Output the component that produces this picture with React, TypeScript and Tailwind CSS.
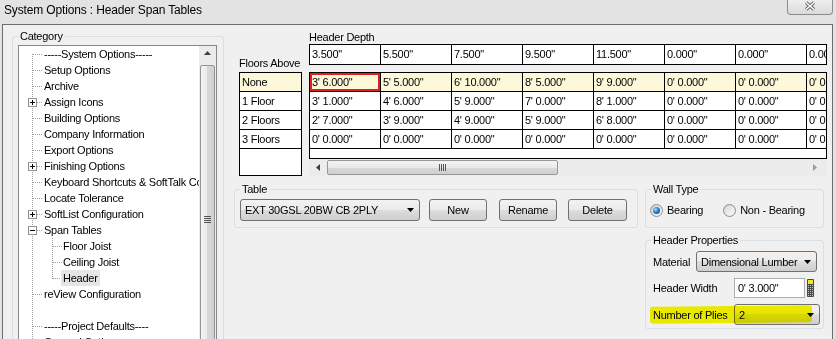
import type { ReactNode } from "react";

const depths = ['3.500"', '5.500"', '7.500"', '9.500"', '11.500"', '0.000"', '0.000"', '0.000"'];
const zero = `0' 0.000"`;
const spans = [
  { floors: "None", values: [`3' 6.000"`, `5' 5.000"`, `6' 10.000"`, `8' 5.000"`, `9' 9.000"`, zero, zero, zero] },
  { floors: "1 Floor", values: [`3' 1.000"`, `4' 6.000"`, `5' 9.000"`, `7' 0.000"`, `8' 1.000"`, zero, zero, zero] },
  { floors: "2 Floors", values: [`2' 7.000"`, `3' 9.000"`, `4' 9.000"`, `5' 9.000"`, `6' 8.000"`, zero, zero, zero] },
  { floors: "3 Floors", values: [zero, zero, zero, zero, zero, zero, zero, zero] },
];

interface TreeNode {
  label: string;
  child?: boolean;
  box?: "plus" | "minus";
  first?: boolean;
  last?: boolean;
  blank?: boolean;
  selected?: boolean;
}

const tree: TreeNode[] = [
  { label: "-----System Options-----", first: true },
  { label: "Setup Options" },
  { label: "Archive" },
  { label: "Assign Icons", box: "plus" },
  { label: "Building Options" },
  { label: "Company Information" },
  { label: "Export Options" },
  { label: "Finishing Options", box: "plus" },
  { label: "Keyboard Shortcuts & SoftTalk Commands" },
  { label: "Locate Tolerance" },
  { label: "SoftList Configuration", box: "plus" },
  { label: "Span Tables", box: "minus" },
  { label: "Floor Joist", child: true },
  { label: "Ceiling Joist", child: true },
  { label: "Header", child: true, last: true, selected: true },
  { label: "reView Configuration" },
  { label: "", blank: true },
  { label: "-----Project Defaults----" },
  { label: "General Options" },
];

const buttonFace =
  "rounded-[3px] border border-[#707070] bg-[linear-gradient(#f2f2f2,#ebebeb_50%,#dddddd_50%,#cfcfcf)]";

function Gutter({ node }: { node: TreeNode }) {
  const w = node.child ? 44 : 25;
  return (
    <svg width={w} height={16} className="shrink-0">
      <g stroke="#a0a0a0" strokeDasharray="1 1" shapeRendering="crispEdges">
        <line x1={13.5} y1={node.first ? 8 : 0} x2={13.5} y2={16} />
        {!node.child && !node.blank && <line x1={14} y1={8.5} x2={24} y2={8.5} />}
        {node.child && <line x1={33.5} y1={0} x2={33.5} y2={node.last ? 9 : 16} />}
        {node.child && <line x1={34} y1={8.5} x2={43} y2={8.5} />}
      </g>
      {node.box && (
        <g shapeRendering="crispEdges">
          <rect x={9.5} y={4.5} width={8} height={8} fill="#ffffff" stroke="#919191" />
          <line x1={11} y1={8.5} x2={16} y2={8.5} stroke="#000" />
          {node.box === "plus" && <line x1={13.5} y1={6} x2={13.5} y2={11} stroke="#000" />}
        </g>
      )}
    </svg>
  );
}

function GroupBox({ label, className, children }: { label: string; className: string; children?: ReactNode }) {
  return (
    <div className={`shrink-0 rounded-[3px] border border-[#d5dfe5] ${className}`}>
      <div className="-mt-[8px] ml-[5px] w-fit bg-[#f0f0f0] px-[2px] leading-[14px]">{label}</div>
      {children}
    </div>
  );
}

function Combo({ text, className }: { text: string; className: string }) {
  return (
    <div className={`flex shrink-0 items-center justify-between pl-[4px] pr-[5px] ${buttonFace} ${className}`}>
      <span className="whitespace-nowrap leading-[14px]">{text}</span>
      <svg width="7" height="4">
        <path d="M0 0h7L3.5 4z" fill="#000" />
      </svg>
    </div>
  );
}

function Radio({ checked, label }: { checked?: boolean; label: string }) {
  return (
    <div className="flex items-center gap-[4px]">
      <div className="flex h-[13px] w-[13px] items-center justify-center rounded-full border border-[#8f8f8f] bg-[linear-gradient(135deg,#cfcfcf,#f9f9f9)]">
        {checked ? (
          <div className="h-[7px] w-[7px] rounded-full bg-[radial-gradient(circle_at_35%_35%,#a9dcff,#2a7fd4_45%,#0b3c7c)]" />
        ) : (
          <div className="h-[9px] w-[9px] rounded-full bg-[linear-gradient(135deg,#d9d9d9,#fafafa)]" />
        )}
      </div>
      <span className="leading-[14px]">{label}</span>
    </div>
  );
}

function Tree() {
  return (
    <div className="ml-[5px] mt-[2px] flex h-[300px] w-[199px] border border-[#828790] bg-white">
      <div className="w-[180px] overflow-hidden">
        {tree.map((node, i) => (
          <div key={i} className="flex h-[16px] items-center whitespace-nowrap">
            <Gutter node={node} />
            {node.selected ? (
              <span className="-ml-[2px] bg-[#e5e5e5] px-[2px] leading-[16px]">{node.label}</span>
            ) : (
              <span className="leading-[16px]">{node.label}</span>
            )}
          </div>
        ))}
      </div>
      <div className="flex w-[17px] shrink-0 flex-col bg-[#ececec]">
        <div className="flex h-[17px] items-center justify-center">
          <svg width="7" height="4">
            <path d="M3.5 0L7 4H0z" fill="#404040" />
          </svg>
        </div>
        <div className="mx-[1px] mt-[4px] flex h-[300px] flex-col items-center rounded-[2px] border border-[#959595] bg-[linear-gradient(90deg,#f4f4f4,#e9e9e9_50%,#d9d9d9_50%,#cfcfcf)] pt-[150px]">
          <svg width="7" height="8">
            <g fill="#555">
              <rect x="0" y="0" width="7" height="1" />
              <rect x="0" y="2" width="7" height="1" />
              <rect x="0" y="4" width="7" height="1" />
              <rect x="0" y="6" width="7" height="1" />
            </g>
          </svg>
        </div>
      </div>
    </div>
  );
}

function SpanGrid() {
  return (
    <div className="ml-[7px] w-[518px] shrink-0">
      <div className="mt-[5px] leading-[14px]">Header Depth</div>
      <div className="flex h-[21px] overflow-hidden border border-black bg-white">
        {depths.map((d, i) => (
          <div key={i} className="w-[71px] shrink-0 border-r border-black pl-[2px] leading-[19px]">
            {d}
          </div>
        ))}
      </div>
      <div className="mt-[7px] h-[87px] overflow-hidden border border-black bg-white">
        {spans.map((row, r) => (
          <div key={r} className={`flex h-[19px] border-b border-black ${r === 0 ? "bg-[#fcf8d9]" : ""}`}>
            {row.values.map((v, c) => (
              <div key={c} className="h-[18px] w-[71px] shrink-0 border-r border-black whitespace-nowrap">
                {r === 0 && c === 0 ? (
                  <div className="h-full border-2 border-[#e0201b] leading-[14px]">{v}</div>
                ) : (
                  <div className="pl-[2px] leading-[18px]">{v}</div>
                )}
              </div>
            ))}
          </div>
        ))}
      </div>
      <div className="flex h-[17px] items-center bg-[#ececec]">
        <div className="flex w-[17px] justify-center">
          <svg width="4" height="7">
            <path d="M4 0v7L0 3.5z" fill="#404040" />
          </svg>
        </div>
        <div className="ml-[1px] flex h-[15px] w-[231px] items-center justify-center rounded-[2px] border border-[#979797] bg-[linear-gradient(#f4f4f4,#e9e9e9_50%,#d9d9d9_50%,#cfcfcf)]">
          <svg width="7" height="7">
            <g fill="#555">
              <rect x="0" y="0" width="1" height="7" />
              <rect x="2" y="0" width="1" height="7" />
              <rect x="4" y="0" width="1" height="7" />
              <rect x="6" y="0" width="1" height="7" />
            </g>
          </svg>
        </div>
        <div className="flex-1" />
        <div className="flex w-[14px] justify-start">
          <svg width="4" height="7">
            <path d="M0 0v7L4 3.5z" fill="#9a9a9a" />
          </svg>
        </div>
      </div>
    </div>
  );
}

function WidthSpinner() {
  return (
    <svg width="7" height="18" className="ml-[2px] shrink-0">
      <rect x="0" y="0" width="7" height="18" rx="1" fill="#4a4a4a" />
      <rect x="1" y="1" width="5" height="4" fill="#f3e62a" />
      <g fill="#c9c9c9">
        {[6, 8, 10, 12, 14, 16].map((y) => (
          <g key={y}>
            <rect x="1" y={y} width="1" height="1" />
            <rect x="3" y={y} width="1" height="1" />
            <rect x="5" y={y} width="1" height="1" />
          </g>
        ))}
      </g>
    </svg>
  );
}

export default function App() {
  return (
    <div className="h-[339px] w-[836px] overflow-hidden bg-[#e3e3e3] font-['Liberation_Sans',Arial,sans-serif] text-[11px] tracking-[-0.25px] text-black">
      <div className="flex h-[24px] items-start justify-between">
        <div className="pl-[4px] text-[12px] leading-[21px] tracking-[-0.15px]">System Options : Header Span Tables</div>
        <div className="mr-[3px] flex h-[15px] w-[46px] items-center justify-center rounded-b-[4px] border border-t-0 border-[#8c8c8c] bg-[linear-gradient(#efefef,#dadada)]">
          <svg width="12" height="10" className="-mt-[2px]">
            <path d="M2 1.5l8 7M10 1.5l-8 7" stroke="#626262" strokeWidth="3.4" />
            <path d="M2 1.5l8 7M10 1.5l-8 7" stroke="#ffffff" strokeWidth="1.6" />
          </svg>
        </div>
      </div>

      <div className="ml-[2px] flex h-[315px] w-[831px] border-l border-r border-t border-[#6e6e6e] bg-[#f0f0f0]">
        <GroupBox label="Category" className="ml-[9px] mt-[11px] h-[320px] w-[212px]">
          <Tree />
        </GroupBox>

        <div className="flex flex-col">
          <div className="flex items-start">
            <div className="ml-[15px] w-[63px] shrink-0">
              <div className="mt-[31px] whitespace-nowrap leading-[14px]">Floors Above</div>
              <div className="mt-[2px] h-[104px] border border-black bg-white">
                {spans.map((row, r) => (
                  <div
                    key={r}
                    className={`h-[19px] border-b border-black pl-[2px] leading-[18px] ${r === 0 ? "bg-[#fcf8d9]" : ""}`}
                  >
                    {row.floors}
                  </div>
                ))}
              </div>
            </div>
            <SpanGrid />
          </div>

          <div className="mt-[13px] flex items-start">
            <GroupBox label="Table" className="ml-[10px] h-[39px] w-[404px]">
              <div className="ml-[5px] mt-[3px] flex items-center">
                <Combo text="EXT 30GSL 20BW CB 2PLY" className="h-[22px] w-[180px]" />
                <div className={`ml-[9px] flex h-[22px] w-[58px] items-center justify-center ${buttonFace}`}>New</div>
                <div className={`ml-[12px] flex h-[22px] w-[58px] items-center justify-center ${buttonFace}`}>Rename</div>
                <div className={`ml-[11px] flex h-[22px] w-[59px] items-center justify-center ${buttonFace}`}>Delete</div>
              </div>
            </GroupBox>

            <div className="ml-[7px] flex w-[179px] flex-col">
              <GroupBox label="Wall Type" className="h-[39px] w-[179px]">
                <div className="mt-[7px] flex h-[14px] items-center gap-[20px] pl-[4px]">
                  <Radio checked label="Bearing" />
                  <Radio label="Non - Bearing" />
                </div>
              </GroupBox>

              <GroupBox label="Header Properties" className="mt-[12px] h-[89px] w-[179px]">
                <div className="mt-[4px] flex h-[21px] items-center pl-[7px]">
                  <span className="w-[43px] shrink-0 leading-[14px]">Material</span>
                  <Combo text="Dimensional Lumber" className="h-[21px] w-[121px]" />
                </div>
                <div className="mt-[6px] flex h-[20px] items-center pl-[7px]">
                  <span className="w-[81px] shrink-0 leading-[14px]">Header Width</span>
                  <div className="h-[20px] w-[71px] shrink-0 border border-[#abadb3] bg-white pl-[3px] leading-[18px]">
                    0' 3.000"
                  </div>
                  <WidthSpinner />
                </div>
                <div className="relative mt-[6px] flex h-[21px] items-center pl-[7px]">
                  <span className="w-[81px] shrink-0 leading-[14px]">Number of Plies</span>
                  <Combo text="2" className="h-[21px] w-[86px]" />
                  <div className="pointer-events-none absolute left-[4px] top-[2px] h-[17px] w-[162px] -rotate-[0.5deg] rounded-[3px] bg-[#f8f800] mix-blend-multiply" />
                </div>
              </GroupBox>
            </div>
          </div>
        </div>
      </div>
    </div>
  );
}
